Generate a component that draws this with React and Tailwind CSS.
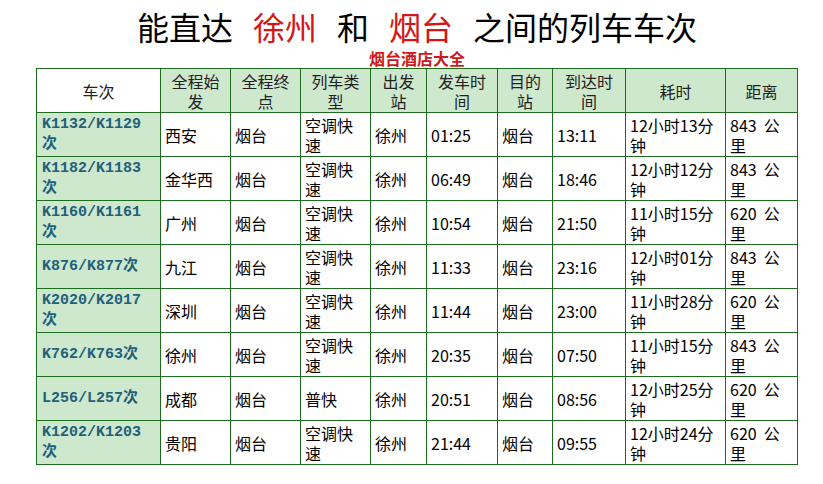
const trains = [
  { no: 'K1132/K1129\n次', from: '西安', to: '烟台', type: '空调快\n速', dep: '徐州', t1: '01:25', dest: '烟台', t2: '13:11', dur: '12小时13分\n钟', dist: '843\u00a0\u00a0公\n里' },
  { no: 'K1182/K1183\n次', from: '金华西', to: '烟台', type: '空调快\n速', dep: '徐州', t1: '06:49', dest: '烟台', t2: '18:46', dur: '12小时12分\n钟', dist: '843\u00a0\u00a0公\n里' },
  { no: 'K1160/K1161\n次', from: '广州', to: '烟台', type: '空调快\n速', dep: '徐州', t1: '10:54', dest: '烟台', t2: '21:50', dur: '11小时15分\n钟', dist: '620\u00a0\u00a0公\n里' },
  { no: 'K876/K877次', from: '九江', to: '烟台', type: '空调快\n速', dep: '徐州', t1: '11:33', dest: '烟台', t2: '23:16', dur: '12小时01分\n钟', dist: '843\u00a0\u00a0公\n里' },
  { no: 'K2020/K2017\n次', from: '深圳', to: '烟台', type: '空调快\n速', dep: '徐州', t1: '11:44', dest: '烟台', t2: '23:00', dur: '11小时28分\n钟', dist: '620\u00a0\u00a0公\n里' },
  { no: 'K762/K763次', from: '徐州', to: '烟台', type: '空调快\n速', dep: '徐州', t1: '20:35', dest: '烟台', t2: '07:50', dur: '11小时15分\n钟', dist: '843\u00a0\u00a0公\n里' },
  { no: 'L256/L257次', from: '成都', to: '烟台', type: '普快', dep: '徐州', t1: '20:51', dest: '烟台', t2: '08:56', dur: '12小时25分\n钟', dist: '620\u00a0\u00a0公\n里' },
  { no: 'K1202/K1203\n次', from: '贵阳', to: '烟台', type: '空调快\n速', dep: '徐州', t1: '21:44', dest: '烟台', t2: '09:55', dur: '12小时24分\n钟', dist: '620\u00a0\u00a0公\n里' },
];

const heads = ['全程始\n发', '全程终\n点', '列车类\n型', '出发\n站', '发车时\n间', '目的\n站', '到达时\n间', '耗时', '距离'];

const cell = 'border border-[#1d6b1d] h-[44px] align-middle whitespace-pre-line leading-[20px] p-0';

export default function App() {
  return (
    <div className="w-[823px] h-[484px] bg-white font-['Noto_Sans_CJK_SC',sans-serif] text-black">
      <div className="pt-[10px] pl-[11px] flex justify-center gap-[20px] text-[32px] leading-[32px]">
        <span>能直达</span>
        <span className="text-[#d41616]">徐州</span>
        <span>和</span>
        <span className="text-[#d41616]">烟台</span>
        <span>之间的列车车次</span>
      </div>
      <div className="mt-[8px] pl-[11px] text-center text-[16px] leading-[16px] font-bold text-[#cc1a1a]">烟台酒店大全</div>
      <table className="mt-[2px] ml-[36px] w-[761px] table-fixed border-collapse text-[16px]">
        <colgroup>
          <col className="w-[124px]" />
          <col className="w-[70px]" />
          <col className="w-[70px]" />
          <col className="w-[70px]" />
          <col className="w-[56px]" />
          <col className="w-[71px]" />
          <col className="w-[55px]" />
          <col className="w-[73px]" />
          <col className="w-[100px]" />
          <col className="w-[72px]" />
        </colgroup>
        <thead>
          <tr>
            <th className={`${cell} bg-white font-normal text-center text-[#222]`}>车次</th>
            {heads.map((h) => (
              <th key={h} className={`${cell} bg-[#cde8cd] font-normal text-center text-[#222]`}>{h}</th>
            ))}
          </tr>
        </thead>
        <tbody>
          {trains.map((t) => (
            <tr key={t.no}>
              <td className={`${cell} bg-[#cde8cd] pl-[5px] font-bold text-[15px] text-[#22607a] font-['Liberation_Mono','Noto_Sans_CJK_SC',monospace]`}>{t.no}</td>
              {[t.from, t.to, t.type, t.dep, t.t1, t.dest, t.t2, t.dur, t.dist].map((v, i) => (
                <td key={i} className={`${cell} pl-[4px]`}>{v}</td>
              ))}
            </tr>
          ))}
        </tbody>
      </table>
    </div>
  );
}
